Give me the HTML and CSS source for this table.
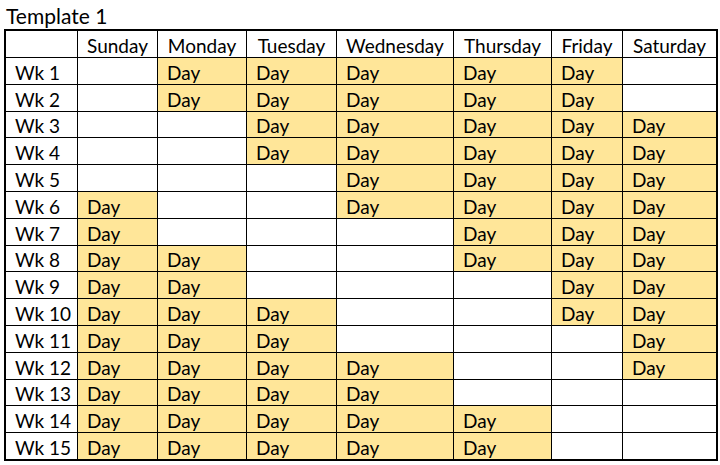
FILE: index.html
```html
<!DOCTYPE html>
<html lang="en">
<head>
<meta charset="utf-8">
<title>Template 1</title>
<link rel="stylesheet" href="styles.css">
</head>
<body>
<div class="sheet">
  <div class="title">Template 1</div>
  <div class="grid">
    <div class="cell"></div><div class="cell hd">Sunday</div><div class="cell hd">Monday</div><div class="cell hd">Tuesday</div><div class="cell hd">Wednesday</div><div class="cell hd">Thursday</div><div class="cell hd">Friday</div><div class="cell hd">Saturday</div>

    <div class="cell">Wk 1</div><div class="cell"></div><div class="cell day">Day</div><div class="cell day">Day</div><div class="cell day">Day</div><div class="cell day">Day</div><div class="cell day">Day</div><div class="cell"></div>
    <div class="cell">Wk 2</div><div class="cell"></div><div class="cell day">Day</div><div class="cell day">Day</div><div class="cell day">Day</div><div class="cell day">Day</div><div class="cell day">Day</div><div class="cell"></div>
    <div class="cell">Wk 3</div><div class="cell"></div><div class="cell"></div><div class="cell day">Day</div><div class="cell day">Day</div><div class="cell day">Day</div><div class="cell day">Day</div><div class="cell day">Day</div>
    <div class="cell">Wk 4</div><div class="cell"></div><div class="cell"></div><div class="cell day">Day</div><div class="cell day">Day</div><div class="cell day">Day</div><div class="cell day">Day</div><div class="cell day">Day</div>
    <div class="cell">Wk 5</div><div class="cell"></div><div class="cell"></div><div class="cell"></div><div class="cell day">Day</div><div class="cell day">Day</div><div class="cell day">Day</div><div class="cell day">Day</div>
    <div class="cell">Wk 6</div><div class="cell day">Day</div><div class="cell"></div><div class="cell"></div><div class="cell day">Day</div><div class="cell day">Day</div><div class="cell day">Day</div><div class="cell day">Day</div>
    <div class="cell">Wk 7</div><div class="cell day">Day</div><div class="cell"></div><div class="cell"></div><div class="cell"></div><div class="cell day">Day</div><div class="cell day">Day</div><div class="cell day">Day</div>
    <div class="cell">Wk 8</div><div class="cell day">Day</div><div class="cell day">Day</div><div class="cell"></div><div class="cell"></div><div class="cell day">Day</div><div class="cell day">Day</div><div class="cell day">Day</div>
    <div class="cell">Wk 9</div><div class="cell day">Day</div><div class="cell day">Day</div><div class="cell"></div><div class="cell"></div><div class="cell"></div><div class="cell day">Day</div><div class="cell day">Day</div>
    <div class="cell">Wk 10</div><div class="cell day">Day</div><div class="cell day">Day</div><div class="cell day">Day</div><div class="cell"></div><div class="cell"></div><div class="cell day">Day</div><div class="cell day">Day</div>
    <div class="cell">Wk 11</div><div class="cell day">Day</div><div class="cell day">Day</div><div class="cell day">Day</div><div class="cell"></div><div class="cell"></div><div class="cell"></div><div class="cell day">Day</div>
    <div class="cell">Wk 12</div><div class="cell day">Day</div><div class="cell day">Day</div><div class="cell day">Day</div><div class="cell day">Day</div><div class="cell"></div><div class="cell"></div><div class="cell day">Day</div>
    <div class="cell">Wk 13</div><div class="cell day">Day</div><div class="cell day">Day</div><div class="cell day">Day</div><div class="cell day">Day</div><div class="cell"></div><div class="cell"></div><div class="cell"></div>
    <div class="cell">Wk 14</div><div class="cell day">Day</div><div class="cell day">Day</div><div class="cell day">Day</div><div class="cell day">Day</div><div class="cell day">Day</div><div class="cell"></div><div class="cell"></div>
    <div class="cell">Wk 15</div><div class="cell day">Day</div><div class="cell day">Day</div><div class="cell day">Day</div><div class="cell day">Day</div><div class="cell day">Day</div><div class="cell"></div><div class="cell"></div>
  </div>
</div>
</body>
</html>
```

FILE: styles.css
```css
html, body {
  margin: 0;
  padding: 0;
  background: #ffffff;
}

body {
  font-family: Lato, "Liberation Sans", sans-serif;
  color: #000000;
}

.sheet {
  padding-left: 4px;
  width: 714px;
}

.title {
  height: 29px;
  font-size: 21px;
  padding-left: 2px;
  box-sizing: border-box;
  display: flex;
  align-items: flex-end;
  line-height: 24px;
  padding-bottom: 1px;
}

.grid {
  display: grid;
  grid-template-columns: 71px 79px 88px 89px 116px 97px 70px 93px;
  grid-template-rows: 26px repeat(15, 25.8px);
  gap: 1px;
  background: #000000;
  border: 2px solid #000000;
  width: 710px;
}

.cell {
  background: #ffffff;
  font-size: 19px;
  line-height: 21px;
  padding: 0 0 1px 9px;
  display: flex;
  align-items: flex-end;
  white-space: nowrap;
  overflow: hidden;
  box-sizing: border-box;
}

.cell.hd {
  justify-content: center;
  padding-left: 0;
}

.cell.day {
  background: #ffe699;
}
```
